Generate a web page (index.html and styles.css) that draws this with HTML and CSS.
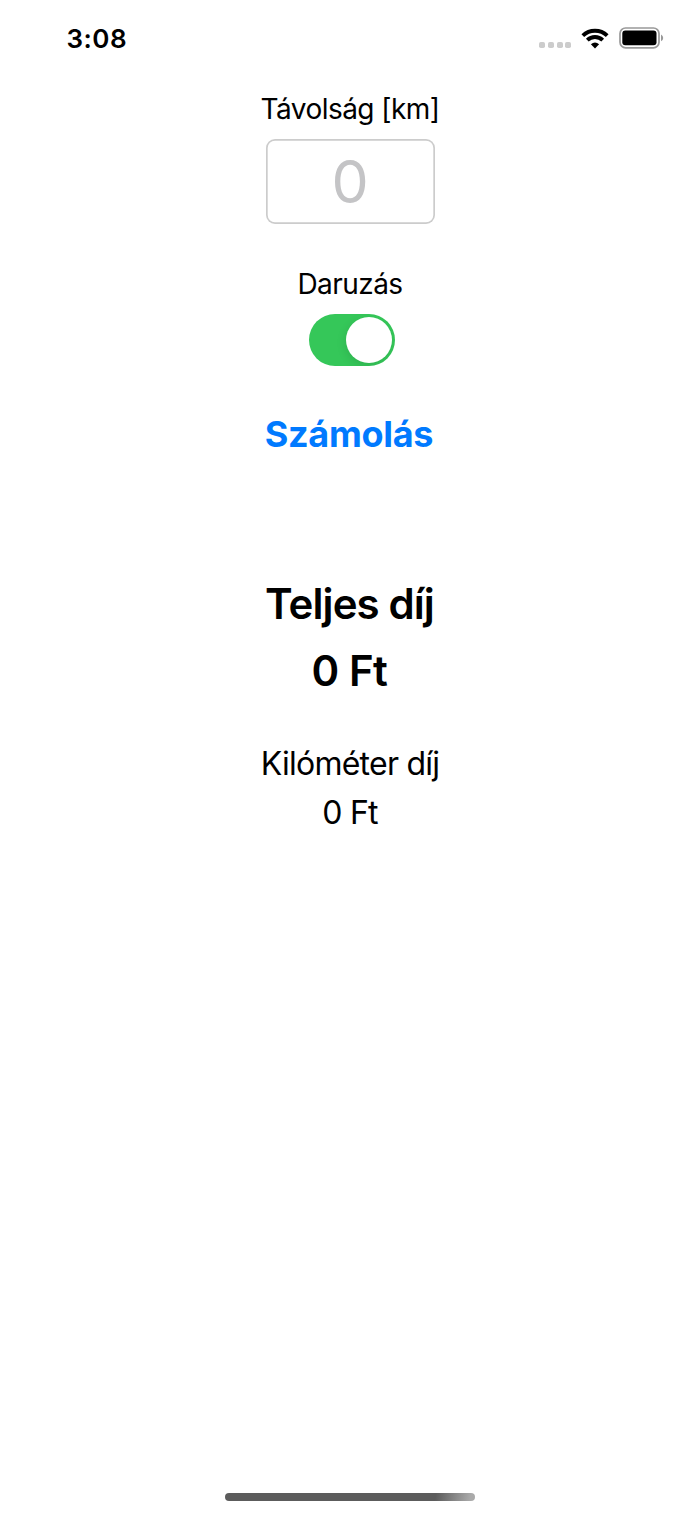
FILE: index.html
```html
<!DOCTYPE html>
<html lang="hu">
<head>
<meta charset="utf-8">
<title>Díj</title>
<link rel="stylesheet" href="styles.css">
</head>
<body>
<header class="status">
  <span class="time">3:08</span>
  <div class="indicators">
    <div class="signal"><i></i><i></i><i></i><i></i></div>
    <svg class="wifi" width="28" height="21" viewBox="0 0 28 21">
      <g fill="none" stroke="#000" stroke-width="3.9">
        <path d="M1.8 7.6A17.6 17.6 0 0 1 26.2 7.6"/>
        <path d="M6.3 12.1A11.1 11.1 0 0 1 21.7 12.1"/>
      </g>
      <path d="M14 20.4L9.9 16.2Q14 12.7 18.1 16.2Z"/>
    </svg>
    <svg class="battery" width="46" height="22" viewBox="0 0 46 22">
      <rect x="1" y="1" width="39" height="19.8" rx="5.6" fill="none" stroke="#999" stroke-width="1.7"/>
      <rect x="3.3" y="3.6" width="34.2" height="14.6" rx="3"/>
      <path d="M42 7.5Q44.2 8.6 44.2 10.9T42 14.3Z" fill="#999"/>
    </svg>
  </div>
</header>
<main class="form">
  <label class="label distance-label" for="km">Távolság [km]</label>
  <input class="distance" id="km" placeholder="0">
  <span class="label crane-label">Daruzás</span>
  <div class="switch" role="switch" aria-checked="true"><span class="knob"></span></div>
  <button class="calculate">Számolás</button>
  <h1 class="total-title">Teljes díj</h1>
  <strong class="total-value">0 Ft</strong>
  <span class="km-title">Kilóméter díj</span>
  <span class="km-value">0 Ft</span>
</main>
<footer class="home"><div class="home-bar"></div></footer>
</body>
</html>
```
FILE: styles.css
```css
* { box-sizing: border-box; }
body {
  margin: 0;
  height: 1515px;
  display: flex;
  flex-direction: column;
  background: #fff;
  color: #000;
  font-family: Inter, "Liberation Sans", sans-serif;
  overflow: hidden;
}
.status {
  height: 76px;
  display: flex;
  justify-content: space-between;
  align-items: center;
  padding: 0 35.4px 0 66.5px;
}
.time { font-size: 26px; font-weight: 600; line-height: 32px; margin-top: 1px; letter-spacing: .5px; }
.indicators { display: flex; align-items: center; }
.signal { display: flex; gap: 2.6px; margin: 14px 9.5px 0 0; }
.signal i { width: 6px; height: 6px; border-radius: 1.8px; background: #ccc; }
.wifi { margin-right: 10px; }
.form { flex: 1; display: flex; flex-direction: column; align-items: center; }
.label { font-size: 28px; line-height: 34px; letter-spacing: -.55px; }
.distance-label { margin-top: 16px; }
.distance {
  width: 169px;
  height: 85px;
  margin-top: 13px;
  padding: 0;
  border: 0;
  border-radius: 9px;
  box-shadow: inset 0 0 0 1.7px #ccc;
  background: #fff;
  font: 59px/80px Inter, sans-serif;
  text-align: center;
}
.distance::placeholder { color: #c4c4c6; opacity: 1; }
.crane-label { margin-top: 43px; }
.switch {
  width: 86px;
  height: 52px;
  margin: 13px 0 0 4px;
  padding: 3px;
  display: flex;
  justify-content: flex-end;
  border-radius: 26px;
  background: #35c759;
  overflow: hidden;
}
.knob {
  width: 46px;
  height: 46px;
  border-radius: 50%;
  background: #fff;
  box-shadow: -1px 3px 10px rgba(0, 0, 0, .1);
}
.calculate {
  margin: 46px 2px 0 0;
  padding: 0;
  border: 0;
  background: none;
  color: #007aff;
  font: 700 36px/44px Inter, sans-serif;
  letter-spacing: -.3px;
}
.total-title, .total-value { margin: 0; font-size: 42px; font-weight: 600; line-height: 52px; letter-spacing: -.9px; }
.total-title { margin: 122px 1px 0 0; }
.total-value { margin: 15px 1px 0 0; letter-spacing: -.5px; }
.km-title, .km-value { font-size: 32px; line-height: 40px; letter-spacing: -.75px; }
.km-title { margin-top: 47px; }
.km-value { margin-top: 9px; }
.home { display: flex; justify-content: center; padding-bottom: 14px; }
.home-bar {
  width: 250px;
  height: 8px;
  border-radius: 4px;
  background: linear-gradient(100deg, #5c5c5c 84%, #aaa 98%);
}
```
